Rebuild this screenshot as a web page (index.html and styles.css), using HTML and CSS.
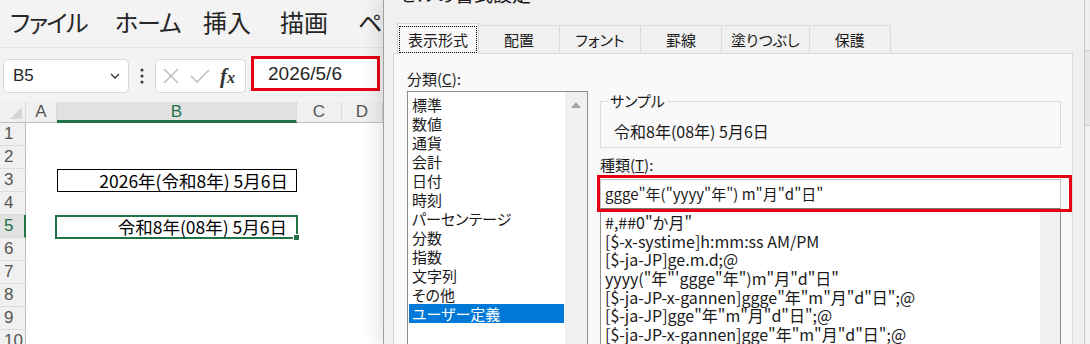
FILE: index.html
```html
<!DOCTYPE html>
<html lang="ja">
<head>
    <meta charset="UTF-8">
    <title>セルの書式設定</title>
    <link rel="stylesheet" href="styles.css">
</head>
<body>
<div class="screen">
    <!-- Excel 本体 -->
    <div class="excel">
        <div class="ribbon-tabs">
            <span>ファイル</span><span>ホーム</span><span>挿入</span><span>描画</span><span>ページ レイアウト</span>
        </div>
        <div class="formula-bar">
            <div class="name-box">
                <span>B5</span>
                <svg width="10" height="6" viewBox="0 0 10 6"><path d="M1 1l4 4 4-4" fill="none" stroke="#333" stroke-width="1.3"/></svg>
            </div>
            <div class="more">
                <svg width="4" height="16" viewBox="0 0 4 16"><circle cx="2" cy="2" r="1.6" fill="#444"/><circle cx="2" cy="8" r="1.6" fill="#444"/><circle cx="2" cy="14" r="1.6" fill="#444"/></svg>
            </div>
            <div class="fx-box">
                <svg width="16" height="16" viewBox="0 0 16 16"><path d="M1 1l14 14M15 1L1 15" stroke="#b8b8b8" stroke-width="1.3"/></svg>
                <svg width="20" height="14" viewBox="0 0 20 14"><path d="M1 7l6 6L19 1" fill="none" stroke="#b8b8b8" stroke-width="1.3"/></svg>
                <span class="fx">f<span>x</span></span>
            </div>
            <div class="formula-input">2026/5/6</div>
        </div>
        <div class="sheet">
            <div class="corner"></div><div class="ch">A</div><div class="ch sel">B</div><div class="ch">C</div><div class="ch">D</div>
            <div class="rh">1</div><div></div><div></div><div></div><div></div>
            <div class="rh">2</div><div></div><div></div><div></div><div></div>
            <div class="rh">3</div><div></div><div class="cell b3">2026年(令和8年) 5月6日</div><div></div><div></div>
            <div class="rh">4</div><div></div><div></div><div></div><div></div>
            <div class="rh sel">5</div><div></div><div class="cell b5">令和8年(08年) 5月6日</div><div></div><div></div>
            <div class="rh">6</div><div></div><div></div><div></div><div></div>
            <div class="rh">7</div><div></div><div></div><div></div><div></div>
            <div class="rh">8</div><div></div><div></div><div></div><div></div>
            <div class="rh">9</div><div></div><div></div><div></div><div></div>
            <div class="rh">10</div><div></div><div></div><div></div><div></div>
        </div>
    </div>

    <!-- セルの書式設定ダイアログ -->
    <div class="dialog">
        <div class="title"><span>セルの書式設定</span></div>
        <div class="tabs">
            <div class="tab active"><span>表示形式</span></div>
            <div class="tab">配置</div>
            <div class="tab">フォント</div>
            <div class="tab">罫線</div>
            <div class="tab">塗りつぶし</div>
            <div class="tab">保護</div>
        </div>
        <div class="panel">
            <div class="left-col">
                <div class="label">分類(<u>C</u>):</div>
                <div class="cat-list">
                    <div class="cat-items">
                        <div>標準</div>
                        <div>数値</div>
                        <div>通貨</div>
                        <div>会計</div>
                        <div>日付</div>
                        <div>時刻</div>
                        <div>パーセンテージ</div>
                        <div>分数</div>
                        <div>指数</div>
                        <div>文字列</div>
                        <div>その他</div>
                        <div class="sel">ユーザー定義</div>
                    </div>
                    <div class="scroll">
                        <svg width="12" height="8" viewBox="0 0 12 8"><path d="M6 1l5 6H1z" fill="#a6a6a6"/></svg>
                    </div>
                </div>
            </div>
            <div class="right-col">
                <fieldset class="sample">
                    <legend>サンプル</legend>
                    <p>令和8年(08年) 5月6日</p>
                </fieldset>
                <div class="label type-label">種類(<u>T</u>):</div>
                <div class="type-box">
                    <div class="type-input">ggge"年("yyyy"年") m"月"d"日"</div>
                </div>
                <div class="fmt-list">
                    <div class="fmt-items">
                        <div>#,##0"か月"</div>
                        <div>[$-x-systime]h:mm:ss AM/PM</div>
                        <div>[$-ja-JP]ge.m.d;@</div>
                        <div>yyyy("年"'ggge"年")m"月"d"日"</div>
                        <div>[$-ja-JP-x-gannen]ggge"年"m"月"d"日";@</div>
                        <div>[$-ja-JP]gge"年"m"月"d"日";@</div>
                        <div>[$-ja-JP-x-gannen]gge"年"m"月"d"日";@</div>
                    </div>
                    <div class="scroll"></div>
                </div>
            </div>
        </div>
    </div>

    <div class="backdrop">
        <div class="band1"></div>
        <div class="band2"></div>
    </div>
</div>
</body>
</html>
```

FILE: styles.css
```css
body {
    margin: 0;
    width: 1090px;
    height: 344px;
    overflow: hidden;
    font-family: "Noto Sans CJK JP", sans-serif;
    color: #1a1a1a;
}
.screen {
    display: flex;
    height: 344px;
    overflow: hidden;
}

/* Excel */
.excel {
    width: 383px;
    flex: none;
    overflow: hidden;
    background: #f3f3f3;
}
.ribbon-tabs {
    height: 48px;
    box-sizing: border-box;
    display: flex;
    align-items: center;
    padding: 0 0 5px 10px;
    font-size: 24px;
    color: #262626;
    white-space: nowrap;
    font-feature-settings: "palt";
    border-bottom: 1px solid #e4e4e4;
}
.ribbon-tabs span {
    flex: none;
}
.ribbon-tabs span:nth-child(1) { width: 105px; letter-spacing: -1.5px; }
.ribbon-tabs span:nth-child(2) { width: 88px; letter-spacing: -1px; }
.ribbon-tabs span:nth-child(3) { width: 77px; }
.ribbon-tabs span:nth-child(4) { width: 78px; }
.formula-bar {
    height: 54px;
    display: flex;
    align-items: flex-start;
}
.formula-bar > div {
    flex: none;
}
.name-box, .fx-box {
    margin-top: 11px;
    height: 34px;
    box-sizing: border-box;
    background: #fff;
    border: 1px solid #d8d8d8;
    border-radius: 5px;
    display: flex;
    align-items: center;
}
.name-box {
    margin-left: 3px;
    width: 126px;
    justify-content: space-between;
    padding: 0 8px 0 9px;
    font-family: "Liberation Sans", sans-serif;
    font-size: 17px;
    color: #262626;
}
.more {
    width: 26px;
    height: 34px;
    margin-top: 11px;
    display: flex;
    align-items: center;
    justify-content: center;
}
.fx-box {
    width: 91px;
    padding-left: 7px;
    gap: 11px;
}
.fx {
    font-family: "Liberation Serif", serif;
    font-style: italic;
    font-weight: bold;
    font-size: 21px;
    color: #333;
    margin-left: -1px;
}
.fx span {
    font-size: 16px;
}
.formula-input {
    margin: 8px 0 0 5px;
    width: 129px;
    height: 35px;
    box-sizing: border-box;
    border: 3px solid #e60012;
    background: #fff;
    padding-left: 14px;
    font-family: "Liberation Sans", sans-serif;
    font-size: 19px;
    line-height: 29px;
    color: #262626;
}
.sheet {
    display: grid;
    grid-template-columns: 26px 31px 240px 45px 41px;
    grid-template-rows: 21px repeat(10, 23px);
    background: #fff;
}
.corner, .ch {
    background: #f0f0f0;
    border-right: 1px solid #d9d9d9;
    border-bottom: 1px solid #bfbfbf;
    box-sizing: border-box;
}
.corner {
    position: relative;
}
.corner::after {
    content: "";
    position: absolute;
    right: 3px;
    bottom: 3px;
    border-left: 12px solid transparent;
    border-bottom: 12px solid #d6d6d6;
}
.ch {
    text-align: center;
    font-family: "Liberation Sans", sans-serif;
    font-size: 17px;
    line-height: 20px;
    color: #555;
}
.ch.sel {
    background: #e1e1e1;
    color: #217346;
    border-bottom: 3px solid #217346;
}
.rh {
    background: #f0f0f0;
    border-right: 1px solid #bfbfbf;
    border-bottom: 1px solid #dcdcdc;
    box-sizing: border-box;
    padding-left: 4px;
    font-family: "Liberation Sans", sans-serif;
    font-size: 17px;
    line-height: 22px;
    color: #555;
}
.rh.sel {
    background: #e1e1e1;
    color: #217346;
    border-right: 2px solid #217346;
}
.cell {
    box-sizing: border-box;
    text-align: right;
    padding-right: 8px;
    font-size: 17.5px;
    color: #000;
    white-space: nowrap;
}
.b3 {
    border: 1px solid #000;
    line-height: 21px;
}
.b5 {
    margin: 0 -1px -1px -2px;
    border: 2px solid #217346;
    line-height: 20px;
    padding-right: 9px;
    position: relative;
}
.b5::after {
    content: "";
    position: absolute;
    right: -4px;
    bottom: -4px;
    width: 5px;
    height: 5px;
    background: #217346;
    border: 1px solid #fff;
}

/* ダイアログ */
.dialog {
    width: 702px;
    flex: none;
    box-sizing: border-box;
    background: #f0f0f0;
    border-left: 1px solid #a0a0a0;
    border-right: 1px solid #c8c8c8;
    padding: 0 11px 0 9px;
    display: flex;
    flex-direction: column;
    box-shadow: -6px 0 16px rgba(0, 0, 0, 0.1);
}
.title {
    height: 23px;
    flex: none;
    overflow: hidden;
    padding-left: 5px;
    font-size: 19px;
}
.title span {
    display: block;
    line-height: 20px;
    margin-top: -16px;
}
.tabs {
    display: flex;
    align-items: flex-end;
    margin-left: 4px;
    height: 30px;
    flex: none;
}
.tab {
    height: 28px;
    min-width: 82px;
    box-sizing: border-box;
    border: 1px solid #d9d9d9;
    border-bottom: none;
    margin-left: -1px;
    background: #f0f0f0;
    padding: 0 9px;
    font-size: 15px;
    display: flex;
    align-items: center;
    justify-content: center;
    white-space: nowrap;
    font-feature-settings: "palt";
}
.tab.active {
    height: 31px;
    min-width: 0;
    width: 82px;
    margin: 0 0 -1px 0;
    padding: 2px 1px 1px;
    background: #f9f9f9;
    position: relative;
    z-index: 1;
}
.tab.active span {
    flex: 1;
    align-self: stretch;
    display: flex;
    align-items: center;
    justify-content: center;
    outline: 1px dotted #000;
    outline-offset: -1px;
}
.panel {
    flex: 1;
    background: #f9f9f9;
    border: 1px solid #d9d9d9;
    border-bottom: none;
    padding: 14px 11px 0 13px;
    display: flex;
    gap: 12px;
}
.left-col {
    width: 181px;
    flex: none;
}
.right-col {
    flex: 1;
    min-width: 0;
}
.label {
    font-size: 15px;
    line-height: 22px;
}
.cat-list {
    margin-top: 1px;
    height: 300px;
    box-sizing: border-box;
    background: #fff;
    border: 1px solid #8f8f8f;
    display: flex;
}
.cat-items {
    flex: 1;
    padding-top: 3px;
    margin: 0 1px;
}
.cat-items div {
    height: 19px;
    line-height: 19px;
    padding-left: 3px;
    font-size: 15px;
    font-feature-settings: "palt";
}
.cat-items .sel {
    background: #0078d7;
    color: #fff;
}
.scroll {
    width: 22px;
    background: #f0f0f0;
    display: flex;
    justify-content: center;
    padding-top: 9px;
    box-sizing: border-box;
}
.sample {
    margin: 24px 0 0;
    padding: 11px 0 6px 13px;
    border: 1px solid #dcdcdc;
}
.sample legend {
    padding: 0 2px;
    margin-left: -6px;
    font-size: 15px;
    line-height: 18px;
    font-feature-settings: "palt";
}
.sample p {
    margin: 0;
    font-size: 16px;
    line-height: 20px;
}
.type-label {
    margin-top: 7px;
    line-height: 20px;
}
.type-box {
    margin: 0 -11px 0 -3px;
    border: 3px solid #e60012;
    padding: 1px 8px 0 0;
}
.type-input {
    height: 30px;
    box-sizing: border-box;
    background: #fff;
    border: 1px solid #c5c5c5;
    border-bottom-color: #7a7a7a;
    padding-left: 4px;
    font-size: 15px;
    line-height: 28px;
    white-space: nowrap;
}
.fmt-list {
    height: 133px;
    background: #fff;
    border: 1px solid #8f8f8f;
    border-top: none;
    display: flex;
}
.fmt-items {
    flex: 1;
    padding: 1px 0 0 4px;
    overflow: hidden;
}
.fmt-items div {
    height: 18.7px;
    line-height: 18.7px;
    font-size: 16px;
    white-space: nowrap;
}
.fmt-list .scroll {
    width: 20px;
}

.backdrop {
    flex: 1;
    background: #f3f3f3;
}
.band1 {
    height: 50px;
    background: #efefef;
    border-bottom: 1px solid #d0d0d0;
}
.band2 {
    height: 74px;
    background: #e6e6e6;
    border-bottom: 1px solid #d0d0d0;
}
```
